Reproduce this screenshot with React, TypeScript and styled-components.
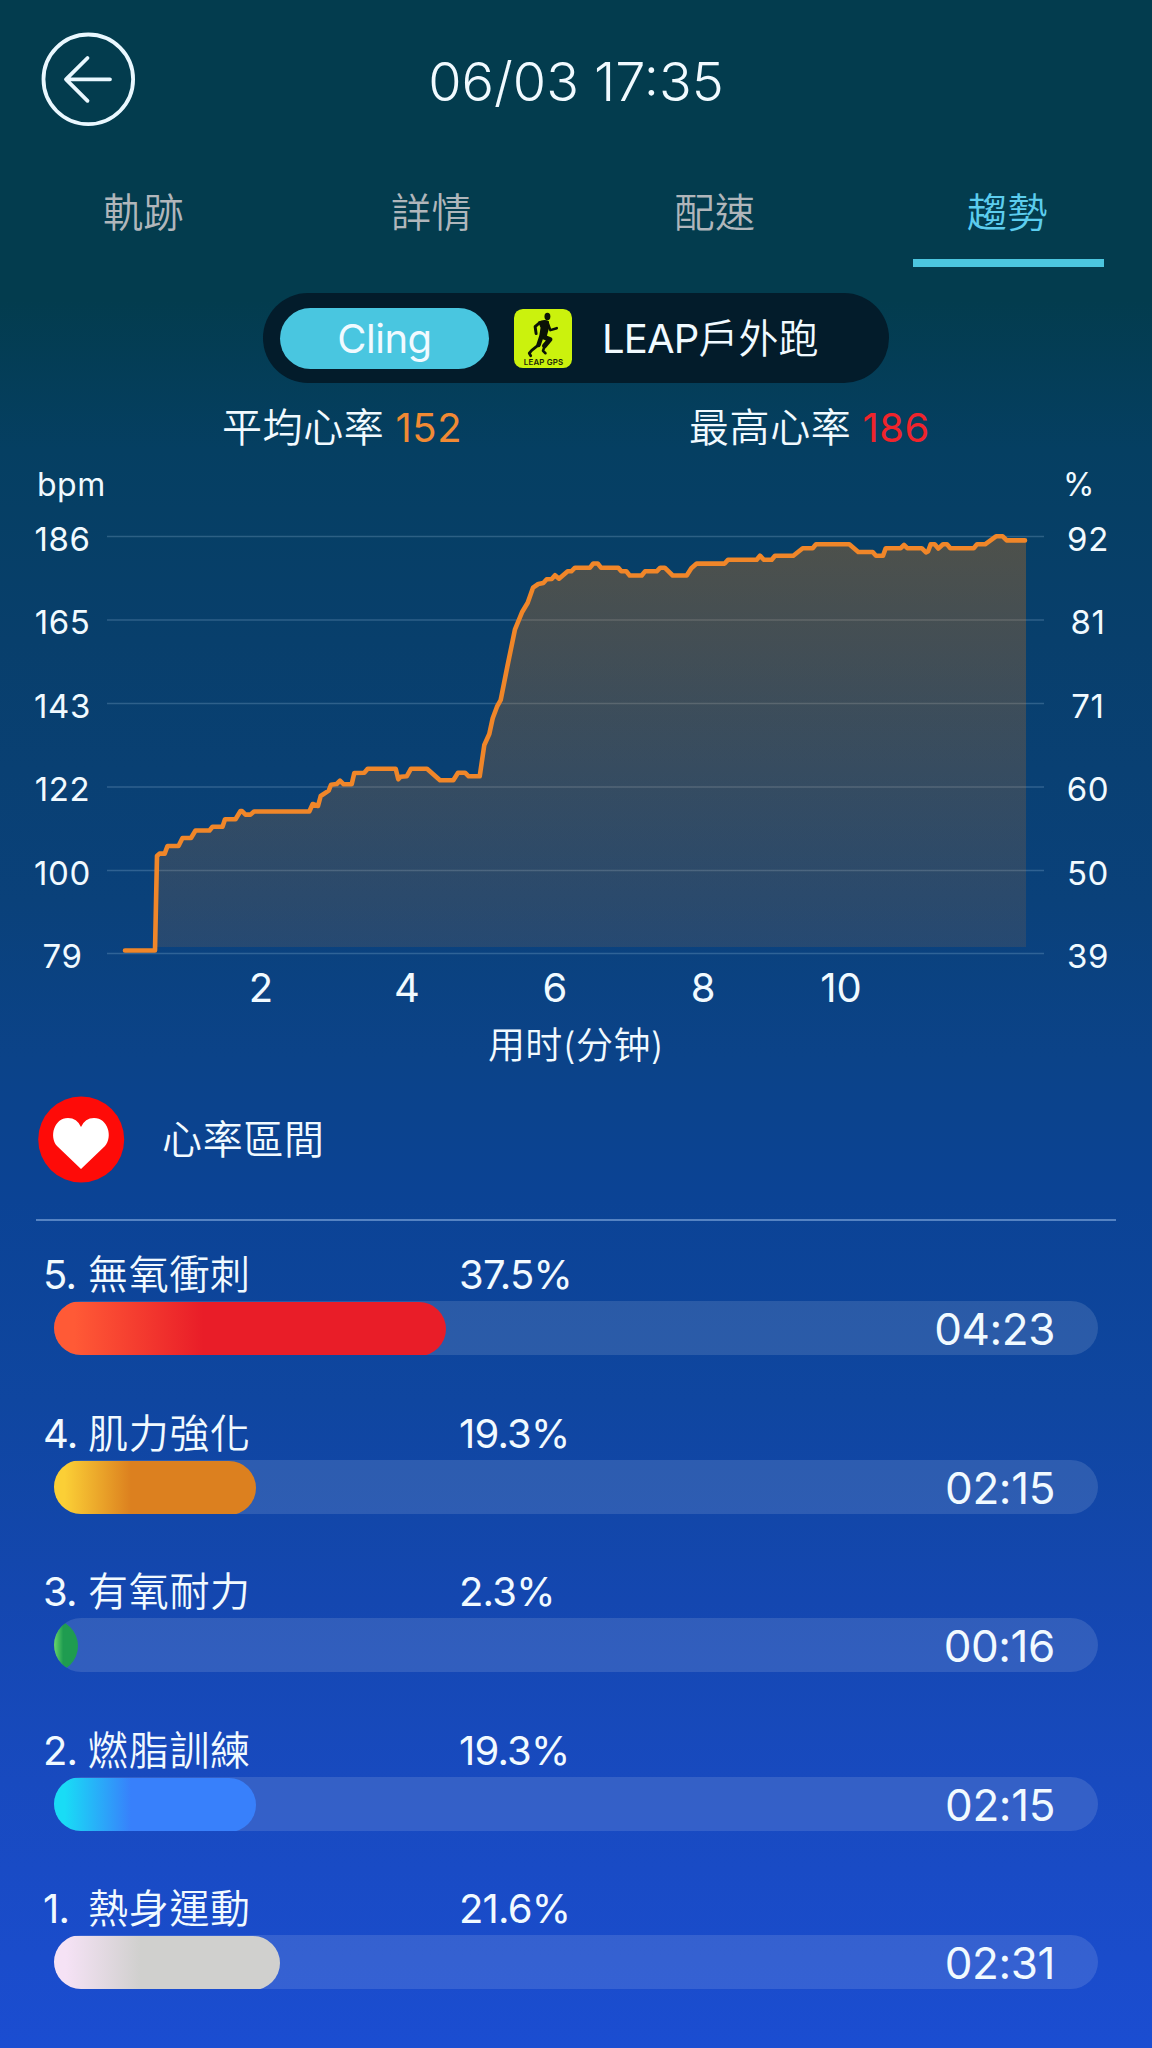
import React from "react";
import styled, { createGlobalStyle } from "styled-components";

const GlobalStyle = createGlobalStyle`
  * { box-sizing: border-box; }
  body { margin: 0; background: #033c4e; }
`;

const Screen = styled.main`
  width: 1152px;
  height: 2048px;
  overflow: hidden;
  display: flex;
  flex-direction: column;
  color: #f1faff;
  font-family: Inter, "Noto Sans CJK TC", sans-serif;
  font-weight: 350;
  font-size: 40px;
  background: linear-gradient(
    180deg,
    #033c4e 0px,
    #033c4e 300px,
    #053f62 450px,
    #083f6c 640px,
    #0a417a 900px,
    #0b4389 1060px,
    #0b4395 1200px,
    #0f46a0 1400px,
    #1447b0 1600px,
    #184abf 1780px,
    #1b4dd1 2048px
  );
  > * { flex-shrink: 0; }
`;

const Header = styled.header`
  height: 158px;
  padding: 0 40px;
  display: grid;
  grid-template-columns: 96px 1fr 96px;
  align-items: center;
`;

const BackButton = styled.button`
  width: 96px;
  height: 96px;
  padding: 0;
  border: 0;
  background: none;
  display: block;
`;

const Title = styled.h1`
  margin: 0;
  padding-top: 5px;
  text-align: center;
  font-size: 54px;
  line-height: 60px;
  font-weight: 300;
`;

const Tabs = styled.nav`
  height: 109px;
  display: grid;
  grid-template-columns: repeat(4, 288px);
`;

const Tab = styled.div<{ $active?: boolean; $inset?: number }>`
  margin: 0 48px 0 49px;
  padding: 28px ${(p) => p.$inset ?? 2}px 0 0;
  text-align: center;
  line-height: 54px;
  letter-spacing: 0.6px;
  border-bottom: 8px solid ${(p) => (p.$active ? "#4cc6df" : "transparent")};
  color: ${(p) => (p.$active ? "#5ccdee" : "#b0b6bb")};
`;

const Switcher = styled.div`
  width: 626px;
  height: 90px;
  margin: 26px 0 0 263px;
  padding: 0 17px;
  border-radius: 45px;
  background: #031c2b;
  display: flex;
  align-items: center;
`;

const ActiveSource = styled.div`
  width: 209px;
  height: 61px;
  border-radius: 31px;
  background: #49c6e0;
  text-align: center;
  font-weight: 400;
  line-height: 62px;
  letter-spacing: -0.5px;
`;

const AppIcon = styled.svg`
  width: 58px;
  height: 59px;
  margin: 0 30px 0 25px;
`;

const SourceName = styled.div`
  padding-top: 2px;
  line-height: 60px;
  white-space: nowrap;
`;

const Latin = styled.span`
  font-weight: 400;
  letter-spacing: -0.8px;
`;

const Stats = styled.div`
  height: 88px;
  display: flex;
`;

const Stat = styled.div<{ $left: number; $color: string }>`
  width: 468px;
  padding-left: ${(p) => p.$left}px;
  line-height: 90px;
  letter-spacing: 0.6px;
  white-space: nowrap;
  b {
    margin-left: 11px;
    font-weight: 400;
    color: ${(p) => p.$color};
  }
`;

const Units = styled.div`
  height: 26px;
  padding: 0 57px 0 37px;
  display: flex;
  justify-content: space-between;
  font-size: 32px;
  line-height: 27px;
  font-weight: 400;
  letter-spacing: 0.5px;
`;

const ChartRow = styled.section`
  height: 514px;
  display: grid;
  grid-template-columns: 107px 937px 88px;
`;

const Scale = styled.div`
  display: flex;
  flex-direction: column;
  text-align: center;
  font-size: 33px;
  font-weight: 400;
  letter-spacing: 0.6px;
`;

const LeftScale = styled(Scale)`
  padding-left: 18px;
`;

const ScaleValue = styled.span`
  height: 83.4px;
  line-height: 84px;
`;

const Caption = styled.div`
  height: 66px;
  text-align: center;
  font-family: Inter, "Noto Sans CJK SC", sans-serif;
  font-size: 37px;
  line-height: 69px;
  letter-spacing: 0.4px;
`;

const ZoneHeader = styled.div`
  height: 124px;
  margin: 0 36px;
  padding-left: 2px;
  display: flex;
  align-items: center;
  gap: 37px;
  svg { flex: none; }
`;

const ZoneTitle = styled.span`
  padding-bottom: 4px;
  letter-spacing: 0.7px;
`;

const Divider = styled.hr`
  height: 2px;
  margin: 18px 36px 0;
  border: 0;
  background: rgba(160, 195, 240, 0.5);
`;

const Zones = styled.section`
  padding: 26px 54px 0 43px;
`;

const Zone = styled.div`
  height: 158.5px;
`;

const ZoneLabel = styled.div`
  height: 54px;
  line-height: 56px;
  display: grid;
  grid-template-columns: 45px 371px 1fr;
`;

const ZoneName = styled.span`
  letter-spacing: 0.7px;
`;

const Track = styled.div`
  height: 54px;
  margin-left: 11px;
  border-radius: 27px;
  overflow: hidden;
  background: rgba(255, 255, 255, 0.12);
  display: grid;
  align-items: center;
  > * { grid-area: 1 / 1; }
`;

const Fill = styled.div<{ $share: number; $from: string; $to: string }>`
  height: 54px;
  margin-left: ${(p) => p.$share - 100}%;
  width: 100%;
  border-radius: 27px;
  background: linear-gradient(
    90deg,
    ${(p) => p.$from} ${(p) => 100 - p.$share * 0.95}%,
    ${(p) => p.$to} ${(p) => 100 - p.$share * 0.62}%
  );
`;

const Time = styled.span`
  padding-right: 43px;
  text-align: right;
  font-size: 44px;
  font-weight: 400;
  line-height: 56px;
  letter-spacing: -0.4px;
`;

const GRID = [536.5, 620, 703.5, 787, 870.5, 953.5];
const X_TICKS: [string, number][] = [["2", 261], ["4", 407], ["6", 555], ["8", 703], ["10", 841]];

const CURVE =
  "157,856 159.5,853.6 164.7,853.6 167.5,846 178.5,846 182.5,838 191,838 195.5,830.5 209.5,830.5 212.5,826.8 222.5,826.8 225,819.3 235.5,819.3 240.5,811 242,811 245.5,814.6 250.5,814.6 254,811.5 309.3,811.5 312.7,804 318,806 320.7,796 328.7,790.7 331,784.7 336.7,784 340,780.7 343.7,784.3 351.7,784.3 354.3,773 364.3,772.7 367.7,768.7 395.7,768.7 398.3,779.3 400.7,776.7 406.7,776.3 411,768.7 427,768.7 440,780.3 453.3,780.3 458,772.7 465,772.7 468.7,776.3 479.7,776.3 484.3,745 489.3,734 492.7,718.3 497,706.7 500.7,700 507.3,666.7 515,629.3 522.3,611.7 527.7,602.7 533,587.7 538.3,584 543.3,583 546.7,579.3 551.7,579 555,575.3 559,578.7 567.7,571.3 571.3,571.3 575,567.7 590,567.7 593.3,563.5 597.7,563.5 601,567.7 618.3,567.7 621.3,571.3 626.3,571.3 629.7,575.5 641.7,575.5 645,571.3 656.7,571.3 660.3,567.7 664.7,567.7 672.7,575.5 686.7,575.5 691.3,568.3 696.7,563.6 724.7,563.6 728,559.8 756.7,559.8 760,555.7 764,559.8 771.7,559.8 775,555.7 793.3,555.7 802.7,548.2 812.7,548.2 816,544.3 849.3,544.3 858.3,552 872.7,552 876,555.7 883,555.7 885.7,548.2 900.7,548.2 904,545 907.3,548.2 921.7,548.2 926,552.4 928,551.5 930.7,544.3 934.7,544.3 938.3,548.6 943,544.3 947,544.3 950.3,548.2 973.7,548.2 977,544.3 985,544.3 996,536.3 1002.7,536.3 1006.7,540.4 1025,540.4";

const ZONES = [
  { n: 5, name: "無氧衝刺", share: 37.5, time: "04:23", from: "#ff5a36", to: "#e91d28" },
  { n: 4, name: "肌力強化", share: 19.3, time: "02:15", from: "#fbcf36", to: "#dc801f" },
  { n: 3, name: "有氧耐力", share: 2.3, time: "00:16", from: "#5fd068", to: "#1f9c50" },
  { n: 2, name: "燃脂訓練", share: 19.3, time: "02:15", from: "#19dcf6", to: "#3880fb" },
  { n: 1, name: "熱身運動", share: 21.6, time: "02:31", from: "#f5e2f5", to: "#d0d0ce" },
];

function HeartRateChart() {
  return (
    <svg width="937" height="514" viewBox="107 497 937 514">
      <defs>
        <linearGradient id="area" gradientUnits="userSpaceOnUse" x1="0" y1="536" x2="0" y2="947">
          <stop offset="0" stopColor="#f47a0a" stopOpacity="0.3" />
          <stop offset="1" stopColor="#e07c20" stopOpacity="0.13" />
        </linearGradient>
      </defs>
      {GRID.map((y) => (
        <line key={y} x1="107" x2="1044" y1={y} y2={y} stroke="#a8cce8" strokeOpacity="0.24" strokeWidth="1.3" />
      ))}
      <polygon points={`157,947 ${CURVE} 1026,540.4 1026,947`} fill="url(#area)" />
      <polyline
        points={`125,950.5 155,950.5 ${CURVE}`}
        fill="none"
        stroke="#f08629"
        strokeWidth="4.6"
        strokeLinejoin="round"
        strokeLinecap="round"
      />
      {X_TICKS.map(([label, x]) => (
        <text key={label} x={x} y="1002" textAnchor="middle" fill="#f1faff" fontSize="40" fontWeight="400">
          {label}
        </text>
      ))}
    </svg>
  );
}

export default function App() {
  return (
    <>
      <GlobalStyle />
      <Screen>
        <Header>
          <BackButton aria-label="返回">
            <svg width="96" height="96" viewBox="0 0 96 96" fill="none" stroke="#eaf8ff" strokeWidth="3.8">
              <circle cx="48.3" cy="48.3" r="44.8" />
              <path d="M70 48.3H26M47.500 27L26 48.300l21.500 21.500" strokeLinecap="round" strokeLinejoin="round" />
            </svg>
          </BackButton>
          <Title>06/03 17:35</Title>
        </Header>
        <Tabs>
          <Tab>軌跡</Tab>
          <Tab>詳情</Tab>
          <Tab $inset={11}>配速</Tab>
          <Tab $active>趨勢</Tab>
        </Tabs>
        <Switcher>
          <ActiveSource>Cling</ActiveSource>
          <AppIcon viewBox="0 0 59 60">
            <rect width="59" height="60" rx="9" fill="#cbf20d" />
            <ellipse cx="34" cy="7.6" rx="3" ry="3.8" fill="#0b1206" />
            <path d="M24.500 13Q31 9.500 35.500 12.500L36 18L33 29L25.500 28.500L27 19Z" fill="#0b1206" />
            <g fill="none" stroke="#0b1206" strokeLinejoin="round" strokeLinecap="round">
              <path d="M26 14L21.500 18L22.500 25" strokeWidth="3" />
              <path d="M34.500 15L37 21.500L43.500 19.500" strokeWidth="2.6" />
              <path d="M29 28L36.500 31L31 37.500" strokeWidth="5" />
              <path d="M31.500 37L29.500 42.500L32 45" strokeWidth="2.6" />
              <path d="M27.500 29L25 36.500" strokeWidth="4.600" />
              <path d="M25 36.500L18 42L15.500 45L17 47.500" strokeWidth="2.800" />
            </g>
            <text x="30" y="56.500" textAnchor="middle" fontSize="8" fontWeight="600" fill="#1a2408" textLength="40">
              LEAP GPS
            </text>
          </AppIcon>
          <SourceName>
            <Latin>LEAP</Latin>戶外跑
          </SourceName>
        </Switcher>
        <Stats>
          <Stat $left={222} $color="#f18a34">
            平均心率<b>152</b>
          </Stat>
          <Stat $left={221} $color="#f0242c">
            最高心率<b>186</b>
          </Stat>
        </Stats>
        <Units>
          <span>bpm</span>
          <span>%</span>
        </Units>
        <ChartRow>
          <LeftScale>
            {[186, 165, 143, 122, 100, 79].map((v) => (
              <ScaleValue key={v}>{v}</ScaleValue>
            ))}
          </LeftScale>
          <HeartRateChart />
          <Scale>
            {[92, 81, 71, 60, 50, 39].map((v) => (
              <ScaleValue key={v}>{v}</ScaleValue>
            ))}
          </Scale>
        </ChartRow>
        <Caption>用时(分钟)</Caption>
        <ZoneHeader>
          <svg width="87" height="87" viewBox="0 0 87 87">
            <circle cx="43.2" cy="43.5" r="43" fill="#fe0b08" />
            <path d="M43 73L19 50C11 41 16 22 30 22Q39 22 43 31Q47 22 56 22C70 22 75 41 67 50Z" fill="#fff" />
          </svg>
          <ZoneTitle>心率區間</ZoneTitle>
        </ZoneHeader>
        <Divider />
        <Zones>
          {ZONES.map((z) => (
            <Zone key={z.n}>
              <ZoneLabel>
                <Latin>{z.n}.</Latin>
                <ZoneName>{z.name}</ZoneName>
                <Latin>{z.share}%</Latin>
              </ZoneLabel>
              <Track>
                <Fill $share={z.share} $from={z.from} $to={z.to} />
                <Time>{z.time}</Time>
              </Track>
            </Zone>
          ))}
        </Zones>
      </Screen>
    </>
  );
}
